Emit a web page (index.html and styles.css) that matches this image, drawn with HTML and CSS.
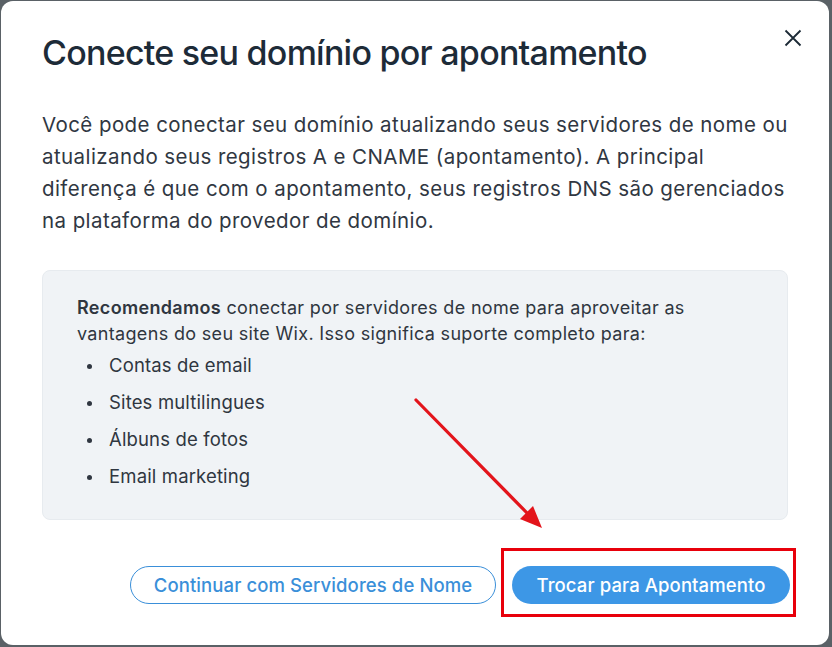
FILE: index.html
```html
<!DOCTYPE html>
<html lang="pt-BR">
<head>
    <meta charset="UTF-8">
    <meta name="viewport" content="width=device-width, initial-scale=1.0">
    <title>Conecte seu domínio</title>
    <link rel="stylesheet" href="styles.css">
</head>
<body>
    <div class="modal">
        <div class="modal-header">
            <h1 class="modal-title">Conecte seu domínio por apontamento</h1>
            <button type="button" class="close-btn" aria-label="Fechar">
                <svg width="18" height="18" viewBox="0 0 18 18">
                    <path d="M1.5 1.5 L16.5 16.5 M16.5 1.5 L1.5 16.5" stroke="#1c2a36" stroke-width="1.8" fill="none"/>
                </svg>
            </button>
        </div>

        <p class="intro">Você pode conectar seu domínio atualizando seus servidores de nome ou<br>
            atualizando seus registros A e CNAME (apontamento). A principal<br>
            diferença é que com o apontamento, seus registros DNS são gerenciados<br>
            na plataforma do provedor de domínio.</p>

        <div class="note">
            <p><strong>Recomendamos</strong> conectar por servidores de nome para aproveitar as<br>
                vantagens do seu site Wix. Isso significa suporte completo para:</p>
            <ul>
                <li>Contas de email</li>
                <li>Sites multilingues</li>
                <li>Álbuns de fotos</li>
                <li>Email marketing</li>
            </ul>
        </div>

        <div class="actions">
            <button type="button" class="btn btn-outline">Continuar com Servidores de Nome</button>
            <div class="highlight">
                <button type="button" class="btn btn-primary">Trocar para Apontamento</button>
            </div>
        </div>

        <svg class="arrow" width="140" height="140" viewBox="0 0 140 140">
            <line x1="2" y1="2" x2="116" y2="118" stroke="#e3141b" stroke-width="3.2" stroke-linecap="round"/>
            <polygon points="128,130 106,121 119,108" fill="#e3141b"/>
        </svg>
    </div>
</body>
</html>
```

FILE: styles.css
```css
body {
    margin: 0;
    background-color: #5a6166;
    font-family: Inter, "Noto Sans", Arial, sans-serif;
    color: #2f3640;
}
.modal {
    position: relative;
    box-sizing: border-box;
    height: 644px;
    margin: 1px 3px 2px 1px;
    padding: 32px 41px 0 41px;
    background-color: #ffffff;
    border-radius: 12px;
}
.modal-header {
    display: flex;
    justify-content: space-between;
    align-items: flex-start;
}
.modal-title {
    margin: 0;
    font-size: 34px;
    line-height: 40px;
    font-weight: 500;
    letter-spacing: -0.75px;
    color: #1d2b38;
    white-space: nowrap;
}
.close-btn {
    margin: -4px -14px 0 0;
    padding: 0;
    border: none;
    background: transparent;
    cursor: pointer;
    line-height: 0;
}
.intro {
    margin: 36px 0 0 0;
    font-size: 20.5px;
    line-height: 32px;
    letter-spacing: 0.42px;
    color: #303742;
    white-space: nowrap;
}
.note {
    margin-top: 33px;
    padding: 24px 34px 24px 34px;
    background-color: #f0f3f6;
    border: 1px solid #e7ebef;
    border-radius: 8px;
    font-size: 18px;
    line-height: 26px;
    letter-spacing: 0.33px;
}
.note p {
    margin: 0;
    white-space: nowrap;
}
.note strong {
    font-weight: 600;
}
.note ul {
    list-style: none;
    margin: 0;
    padding: 0;
}
.note li {
    position: relative;
    padding: 5px 0 5px 32px;
    font-size: 18.5px;
    line-height: 27px;
    letter-spacing: 0.15px;
}
.note li::before {
    content: "";
    position: absolute;
    left: 10px;
    top: 17px;
    width: 5px;
    height: 5px;
    border-radius: 50%;
    background-color: #2f3640;
}
.actions {
    display: flex;
    justify-content: flex-end;
    gap: 16px;
    margin-top: 46px;
}
.btn {
    height: 38px;
    padding: 0 20px;
    border-radius: 19px;
    font-family: Inter, "Noto Sans", Arial, sans-serif;
    font-size: 18.5px;
    font-weight: 500;
    letter-spacing: 0.1px;
    white-space: nowrap;
    cursor: pointer;
}
.btn-outline {
    width: 366px;
    background-color: #ffffff;
    border: 1px solid #3a8fd9;
    color: #3a8fd9;
}
.btn-primary {
    width: 278px;
    background-color: #3d97e6;
    border: none;
    color: #ffffff;
}
.highlight {
    position: relative;
    margin-right: -2px;
}
.highlight::after {
    content: "";
    position: absolute;
    left: -11px;
    right: -6px;
    top: -18px;
    bottom: -13px;
    border: 3px solid #e8000b;
    pointer-events: none;
}
.arrow {
    position: absolute;
    left: 413px;
    top: 397px;
}
```
